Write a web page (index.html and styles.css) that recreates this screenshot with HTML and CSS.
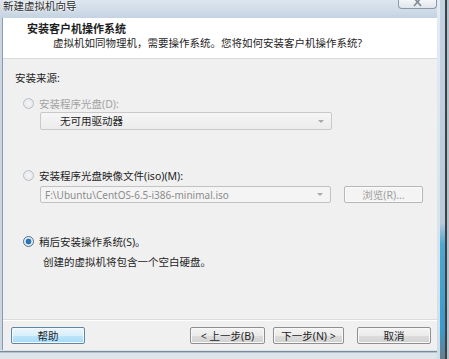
FILE: index.html
```html
<!DOCTYPE html>
<html>
<head>
<meta charset="utf-8">
<link rel="stylesheet" href="styles.css">
</head>
<body>
<div class="window">
  <div class="main">
    <div class="titlebar">
      <span class="title">新建虚拟机向导</span>
      <div class="close">
        <svg width="12" height="7" viewBox="0 0 12 7"><path d="M2 -2 L9 6 M9 -2 L2 6" stroke="#7d8894" stroke-width="1.6" fill="none"/></svg>
      </div>
    </div>
    <div class="mid">
      <div class="lframe"></div>
      <div class="client">
        <div class="header">
          <div class="h-title">安装客户机操作系统</div>
          <div class="h-sub">虚拟机如同物理机，需要操作系统。您将如何安装客户机操作系统?</div>
        </div>
        <div class="body">
          <div class="section-label">安装来源:</div>
          <div class="radio-row r1 disabled"><span class="radio"></span><span>安装程序光盘(D):</span></div>
          <div class="select s1"><span class="sel-text">无可用驱动器</span><span class="arrow"></span></div>
          <div class="radio-row r2"><span class="radio"></span><span>安装程序光盘映像文件(iso)(M):</span></div>
          <div class="combo-row">
            <div class="select s2"><span class="sel-text">F:\Ubuntu\CentOS-6.5-i386-minimal.iso</span><span class="arrow"></span></div>
            <div class="btn browse">浏览(R)...</div>
          </div>
          <div class="radio-row r3"><span class="radio checked"></span><span>稍后安装操作系统(S)。</span></div>
          <div class="note">创建的虚拟机将包含一个空白硬盘。</div>
        </div>
        <div class="footer">
          <div class="btn help">帮助</div>
          <div class="spacer"></div>
          <div class="btn back">&lt; 上一步(B)</div>
          <div class="btn next">下一步(N) &gt;</div>
          <div class="btn cancel">取消</div>
        </div>
      </div>
    </div>
    <div class="bframe"></div>
  </div>
  <div class="rframe">
    <div class="rf-a"></div>
    <div class="rf-b"></div>
    <div class="rf-c"></div>
    <div class="rf-d"></div>
  </div>
</div>
</body>
</html>
```
FILE: styles.css
```css
* { box-sizing: border-box; }
html, body { margin: 0; padding: 0; }
body {
  width: 449px;
  height: 359px;
  overflow: hidden;
  font-family: "Noto Sans", "Noto Sans CJK SC", sans-serif;
  font-size: 10.5px;
  color: #1e1e1e;
  background: #e9eef3;
}
.window { display: flex; width: 449px; height: 359px; }
.main { width: 437px; display: flex; flex-direction: column; }
.titlebar {
  height: 18px;
  display: flex;
  align-items: flex-start;
  background: linear-gradient(180deg, #dde6ef 0%, #cfdbe7 60%, #c4d3e2 100%);
  position: relative;
}
.title {
  margin-left: 3px;
  line-height: 13px;
  font-size: 10.5px;
  color: #2a2a2a;
  text-shadow: 0 0 3px #fff, 0 0 2px #fff;
}
.close {
  position: absolute;
  left: 398px;
  top: 0;
  width: 39px;
  height: 9px;
  border: 1px solid #8a99aa;
  border-top: none;
  border-radius: 0 0 4px 4px;
  background: linear-gradient(180deg, #f4f6f8, #dfe5eb);
  display: flex;
  justify-content: center;
  align-items: flex-start;
  overflow: hidden;
}
.close svg { display: block; }
.mid { display: flex; height: 332px; }
.lframe {
  width: 3px;
  background: linear-gradient(90deg, #c9d6e3 0 2px, #8e9aa7 2px 3px);
}
.client {
  width: 434px;
  display: flex;
  flex-direction: column;
  background: #f0f0f0;
}
.header {
  height: 41px;
  background: #fff;
  border-bottom: 1px solid #d6dbe0;
  padding-left: 24px;
}
.h-title {
  font-weight: bold;
  font-size: 11px;
  line-height: 14px;
  margin-top: 4px;
}
.h-sub {
  margin-left: 26px;
  line-height: 14px;
}
.body { padding-left: 12px; display: flex; flex-direction: column; }
.section-label { line-height: 14px; margin-top: 12px; }
.radio-row { display: flex; align-items: center; height: 14px; }
.radio-row .radio { margin-left: 8px; margin-right: 5px; }
.r1 { margin-top: 11px; }
.r2 { margin-top: 38px; }
.r3 { margin-top: 31px; }
.disabled { color: #a3a3a3; }
.radio {
  width: 11px; height: 11px; border-radius: 50%;
  border: 1px solid #b9bec4;
  background: radial-gradient(circle, #f4f4f4 0%, #e2e5e8 100%);
  display: inline-block;
}
.checked {
  border-color: #4f6f8e;
  background: radial-gradient(circle at 50% 50%, #2a72b8 0 2.6px, #dce9f5 3.2px, #f7fbff 100%);
}
.select {
  height: 18px;
  border: 1px solid #c9c9c9;
  border-radius: 2px;
  background: linear-gradient(180deg, #f6f6f6, #ececec);
  display: flex;
  align-items: center;
}
.s1 { width: 292px; margin-left: 25px; margin-top: 2px; }
.s1 .sel-text { margin-left: 19px; }
.sel-text { line-height: 14px; }
.arrow {
  margin-left: auto;
  margin-right: 7px;
  width: 0; height: 0;
  border-left: 3px solid transparent;
  border-right: 3px solid transparent;
  border-top: 3px solid #a8a8a8;
}
.combo-row { display: flex; margin-top: 4px; margin-left: 25px; height: 17px; }
.s2 { width: 291px; height: 17px; border-color: #c2c2c2; background: #f4f4f4; color: #8c8c8c; }
.s2 .sel-text { margin-left: 4px; font-size: 10px; }
.btn {
  height: 17px;
  border: 1px solid #8e8f8f;
  border-radius: 2px;
  background: linear-gradient(180deg, #f3f3f3 0%, #ebebeb 50%, #dddddd 51%, #d1d1d1 100%);
  display: flex;
  align-items: center;
  justify-content: center;
  line-height: 14px;
  box-shadow: inset 0 0 0 1px #f8f8f8;
}
.browse {
  width: 79px;
  margin-left: 13px;
  color: #a0a0a0;
  border-color: #b6b6b6;
  background: #f4f4f4;
  box-shadow: inset 0 0 0 1px #fbfbfb;
}
.note { margin-left: 28px; margin-top: 7px; line-height: 14px; }
.footer {
  margin-top: auto;
  height: 31px;
  border-top: 1px solid #dcdcdc;
  box-shadow: inset 0 1px 0 #fff;
  display: flex;
  padding: 7px 6px 6px 8px;
}
.spacer { flex: 1; }
.help {
  width: 74px;
  border-color: #5b87a8;
  background: linear-gradient(180deg, #eaf6fd 0%, #d9f0fc 50%, #bee6fd 51%, #a7d9f5 100%);
}
.back { width: 75px; }
.next { width: 71px; margin-left: 8px; }
.cancel { width: 74px; margin-left: 13px; }
.bframe {
  flex: 1;
  background: linear-gradient(180deg, #d7e2ec 0 1px, #7d8b98 1px 2px, #b5c2cf 2px 3px, #dde4ea 3px);
}
.rframe { width: 12px; display: flex; }
.rf-a { width: 3px; background: linear-gradient(180deg, #e3ebf3, #d0dde9); }
.rf-b { width: 5px; background: linear-gradient(180deg, #c4d3e1 0%, #b9cadb 62%, #4ea9d1 68%, #3a9bc9 92%, #6b7d8a 100%); }
.rf-c { width: 2px; background: #3b4248; }
.rf-d { width: 2px; background: #b7c1ca; }
```
